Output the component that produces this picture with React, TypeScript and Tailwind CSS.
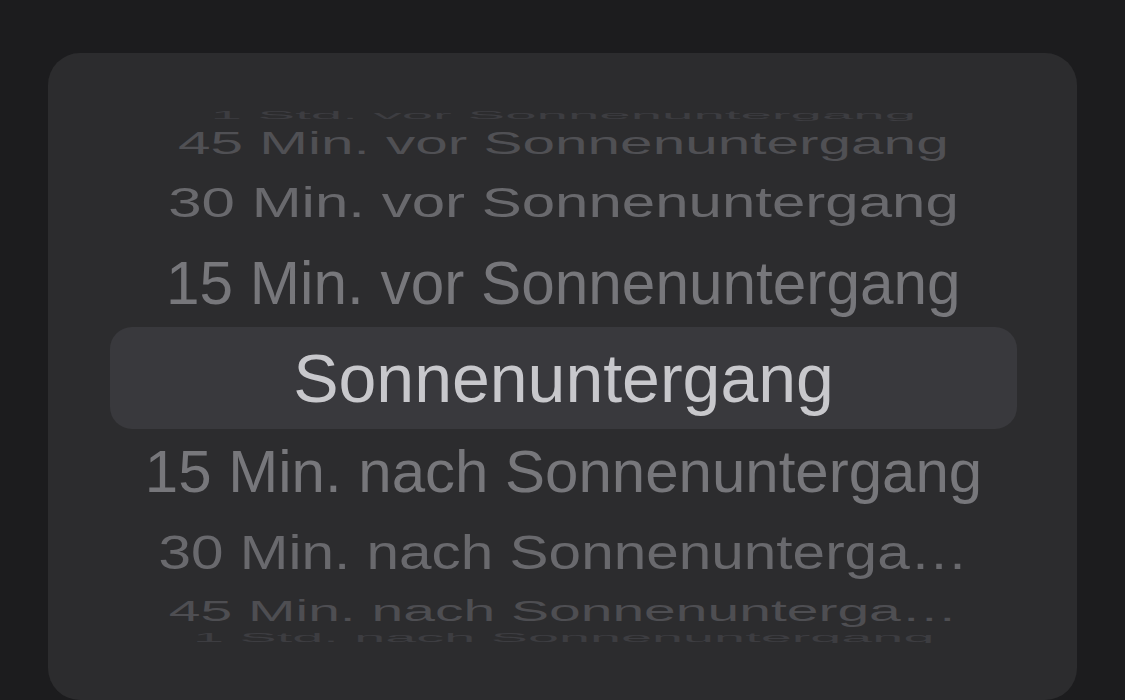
const rows = [
  { label: '1 Std. vor Sonnenuntergang', h: 'h-[30px]', color: 'text-[#3d3d41]', scale: 'scale-x-[0.94] scale-y-[0.19]' },
  { label: '45 Min. vor Sonnenuntergang', h: 'h-[28px]', color: 'text-[#505054]', scale: 'scale-x-[0.975] scale-y-[0.51]' },
  { label: '30 Min. vor Sonnenuntergang', h: 'h-[89px]', color: 'text-[#69696d]', scale: 'scale-x-100 scale-y-[0.72]' },
  { label: '15 Min. vor Sonnenuntergang', h: 'h-[72px]', color: 'text-[#77777b]', scale: 'scale-x-[1.005] scale-y-[1.03]' },
  null,
  { label: '15 Min. nach Sonnenuntergang', h: 'h-[69px]', color: 'text-[#77777b]', scale: 'scale-x-100 scale-y-100' },
  { label: '30 Min. nach Sonnenunterga…', h: 'h-[93px]', color: 'text-[#69696d]', scale: 'scale-x-[0.975] scale-y-[0.81]' },
  { label: '45 Min. nach Sonnenunterga…', h: 'h-[23px]', color: 'text-[#4e4e52]', scale: 'scale-x-[0.95] scale-y-[0.49]' },
  { label: '1 Std. nach Sonnenuntergang', h: 'h-[32px]', color: 'text-[#3d3d41]', scale: 'scale-x-[0.93] scale-y-[0.2]' },
];

export default function App() {
  return (
    <div
      className="w-full h-[700px] overflow-hidden bg-[#1c1c1e] pt-[53px] px-[48px]"
      style={{ fontFamily: '"Liberation Sans", Arial, sans-serif' }}
    >
      <div className="h-[647px] rounded-[32px] bg-[#2c2c2e] pt-[58px] pl-[62px] pr-[60px]">
        {/* wheel viewport, clips the outermost rows */}
        <div className="h-[532px] overflow-hidden">
          <div className="flex flex-col -mt-[11px]">
            {rows.map((row, i) =>
              row ? (
                <div key={i} className={`${row.h} flex items-center justify-center`}>
                  <span
                    className={`block whitespace-nowrap text-[60px] leading-none ${row.color} ${row.scale}`}
                  >
                    {row.label}
                  </span>
                </div>
              ) : (
                <div key={i} className="h-[118px] flex items-center">
                  <div className="w-full h-[102px] rounded-[22px] bg-[#39393d] flex items-center justify-center">
                    <span className="block whitespace-nowrap text-[68px] leading-none text-[#c8c8cc]">
                      Sonnenuntergang
                    </span>
                  </div>
                </div>
              )
            )}
          </div>
        </div>
      </div>
    </div>
  );
}
